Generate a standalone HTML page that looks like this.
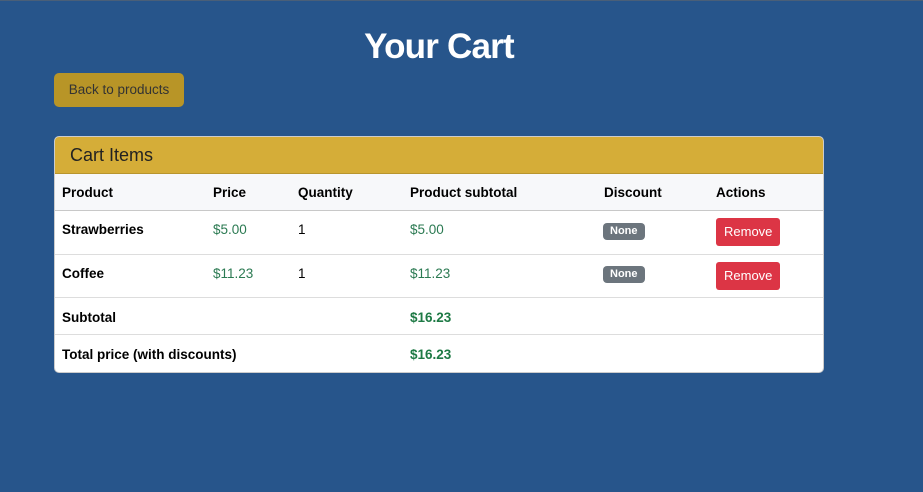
<!DOCTYPE html>
<html><head><style>
*{box-sizing:border-box;margin:0;padding:0}
body{width:923px;height:492px;background:#27558b;font-family:"Liberation Sans",sans-serif;position:relative;overflow:hidden}
.tl{position:absolute;left:0;top:0;width:923px;height:1px;background:#4a5f78}
h1{position:absolute;left:0;width:878px;top:27px;text-align:center;color:#fff;font-size:35px;font-weight:bold;letter-spacing:-0.8px}
.back{position:absolute;left:54px;top:73px;width:130px;height:34px;background:#b89527;border-radius:5px;color:#333;font-size:13.5px;line-height:34px;text-align:center}
.card{position:absolute;left:54px;top:136px;width:770px;height:237px;background:#fff;border:1px solid #ccc;border-radius:5px;overflow:hidden}
.hd{height:37px;background:#d5ad38;border-bottom:1px solid #b8952d;font-size:18px;color:#222;padding-left:15px;line-height:36px}
.r{position:absolute;left:0;width:770px;border-bottom:1px solid #ddd;font-size:13.5px}
.r span{position:absolute;top:0}
.b{font-weight:bold;color:#000}
.g{color:#2b7a52}
.bdg{background:#6c757d;color:#fff;font-size:11px;font-weight:bold;border-radius:4px;padding:2px 7px 3px}
.btn{background:#dc3545;color:#fff;border-radius:3px;font-size:13px;padding:6px 8px 7px 8px}
</style></head><body>
<div class="tl"></div>
<h1>Your Cart</h1>
<div class="back">Back to products</div>
<div class="card">
<div class="hd">Cart Items</div>
<div class="r" style="top:37px;height:37px;background:#f7f8fa;border-bottom:1px solid #c8c8c8">
<span class="b" style="left:7px;top:11px">Product</span><span class="b" style="left:158px;top:11px">Price</span><span class="b" style="left:243px;top:11px">Quantity</span><span class="b" style="left:355px;top:11px">Product subtotal</span><span class="b" style="left:549px;top:11px">Discount</span><span class="b" style="left:661px;top:11px">Actions</span></div>
<div class="r" style="top:74px;height:44px">
<span class="b" style="left:7px;top:11px">Strawberries</span><span class="g" style="left:158px;top:11px">$5.00</span><span style="left:243px;top:11px">1</span><span class="g" style="left:355px;top:11px">$5.00</span><span class="bdg" style="left:548px;top:12px">None</span><span class="btn" style="left:661px;top:7px">Remove</span></div>
<div class="r" style="top:118px;height:43px">
<span class="b" style="left:7px;top:11px">Coffee</span><span class="g" style="left:158px;top:11px">$11.23</span><span style="left:243px;top:11px">1</span><span class="g" style="left:355px;top:11px">$11.23</span><span class="bdg" style="left:548px;top:11px">None</span><span class="btn" style="left:661px;top:7px">Remove</span></div>
<div class="r" style="top:161px;height:37px">
<span class="b" style="left:7px;top:12px">Subtotal</span><span class="b" style="left:355px;top:12px;color:#1e7a45">$16.23</span></div>
<div class="r" style="top:198px;height:37px;border-bottom:none">
<span class="b" style="left:7px;top:12px">Total price (with discounts)</span><span class="b" style="left:355px;top:12px;color:#1e7a45">$16.23</span></div>
</div>
</body></html>
